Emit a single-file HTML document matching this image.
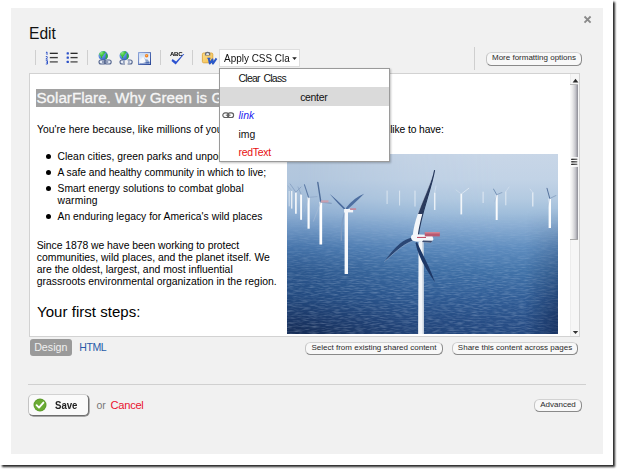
<!DOCTYPE html>
<html>
<head>
<meta charset="utf-8">
<title>Edit</title>
<style>
*{box-sizing:border-box;margin:0;padding:0}
html,body{width:617px;height:469px;overflow:hidden;background:#fff}
body{position:relative;font-family:"Liberation Sans",sans-serif;color:#000}
.abs{position:absolute}
#frame{left:0;top:0;width:613px;height:465px;background:#fff;box-shadow:2px 2px 2px rgba(0,0,0,.85)}
#panel{left:11px;top:8px;width:592px;height:446px;background:#f1f1f1}
#title{left:29px;top:25px;font-size:15.6px;line-height:18px;color:#111;white-space:nowrap}
.vsep{width:1px;background:#cfcfcf}
.btn{border:1px solid #8a8a8a;border-top-color:#d2d2d2;border-left-color:#c4c4c4;border-radius:5.5px;background:#f8f8f8;color:#2a2a2a;font-size:8px;text-align:center;white-space:nowrap}
#editor{left:29px;top:73px;width:551px;height:264px;background:#fff;border:1px solid #d2d2d2;overflow:hidden}
.t{white-space:nowrap}
.di{position:absolute;left:0;width:169px;height:18.5px;padding-left:18.5px;padding-top:1.3px;font-size:10.45px;line-height:18.5px;color:#111;white-space:nowrap;overflow:hidden}
</style>
</head>
<body>
<div id="frame" class="abs"></div>
<div id="panel" class="abs"></div>

<svg class="abs" style="left:583px;top:15px" width="9" height="9" viewBox="0 0 9 9"><path d="M1.5 1.5 L7.6 7.6 M7.6 1.5 L1.5 7.6" stroke="#8a8a8a" stroke-width="1.8" fill="none"/></svg>

<div id="title" class="abs">Edit</div>

<div class="abs vsep" style="left:35px;top:50px;height:15px"></div>
<div class="abs vsep" style="left:87px;top:50px;height:15px"></div>
<div class="abs vsep" style="left:160px;top:50px;height:15px"></div>
<div class="abs vsep" style="left:192px;top:50px;height:15px"></div>
<div class="abs vsep" style="left:474px;top:47px;height:23px"></div>
<svg class="abs" style="left:45px;top:51px" width="14" height="14" viewBox="0 0 14 14">
<path d="M4.8 2.35H12.8" stroke="#2a2a2a" stroke-width="1.35"/><path d="M4.8 6.6H12.8" stroke="#3a3a3a" stroke-width="1.35"/><path d="M4.8 10.9H12.8" stroke="#505050" stroke-width="1.35"/>
<path d="M0.9 1.8L2 0.9V3.9" stroke="#2d52c8" stroke-width="1" fill="none"/>
<path d="M0.8 5.6Q2.6 5 2.4 6.4L0.9 8.1H2.8" stroke="#2d52c8" stroke-width="0.95" fill="none"/>
<path d="M0.8 9.7H2.5V13H0.8M1.3 11.3H2.5" stroke="#2d52c8" stroke-width="0.95" fill="none"/>
</svg>
<svg class="abs" style="left:65.5px;top:51px" width="13" height="14" viewBox="0 0 13 14">
<path d="M4.5 2.35H11.6" stroke="#2a2a2a" stroke-width="1.35"/><path d="M4.5 6.6H11.6" stroke="#3a3a3a" stroke-width="1.35"/><path d="M4.5 10.9H11.6" stroke="#505050" stroke-width="1.35"/>
<rect x="0.6" y="1.2" width="2.3" height="2.3" rx="0.5" fill="#2d52c8"/><rect x="0.6" y="5.45" width="2.3" height="2.3" rx="0.5" fill="#2d52c8"/><rect x="0.6" y="9.75" width="2.3" height="2.3" rx="0.5" fill="#2d52c8"/>
</svg>
<svg class="abs" style="left:98.4px;top:50.9px" width="14" height="14" viewBox="0 0 14 14"><defs><radialGradient id="gl1" cx="0.3" cy="0.25" r="0.9"><stop offset="0" stop-color="#9cc2f5"/><stop offset="0.55" stop-color="#4f80dc"/><stop offset="1" stop-color="#2c55b8"/></radialGradient>
<radialGradient id="gg1" cx="0.3" cy="0.2" r="0.9"><stop offset="0" stop-color="#8ee88a"/><stop offset="0.5" stop-color="#3cc43a"/><stop offset="1" stop-color="#2a9a2c"/></radialGradient></defs>
<circle cx="5.2" cy="4.7" r="4.7" fill="url(#gl1)"/>
<path d="M1.2 2.4 Q3 -0.2 6.2 0.2 Q8 0.8 7.4 2 Q5.8 2.4 5.6 3.8 Q5.4 5 4.2 5.2 Q4.6 6.6 3.6 7.4 Q2.6 6.4 2.6 5.2 Q1 4.4 1.2 2.4Z" fill="url(#gg1)"/>
<path d="M8.2 2.2 Q9.8 3.6 9.8 5.4 Q9.4 7.4 7.8 8.6 Q7 7.6 7.8 6.2 Q7.2 4.6 8.2 2.2Z" fill="#2fae36"/><rect x="1" y="9" width="6.4" height="4" rx="2" fill="#e6ecf6" stroke="#55668f" stroke-width="1.1"/>
<rect x="6.8" y="9" width="6.4" height="4" rx="2" fill="#e6ecf6" stroke="#55668f" stroke-width="1.1"/>
<path d="M4 11H10.2" stroke="#4a5c88" stroke-width="1.1"/></svg>
<svg class="abs" style="left:118.6px;top:50.9px" width="14" height="14" viewBox="0 0 14 14"><defs><radialGradient id="gl2" cx="0.3" cy="0.25" r="0.9"><stop offset="0" stop-color="#9cc2f5"/><stop offset="0.55" stop-color="#4f80dc"/><stop offset="1" stop-color="#2c55b8"/></radialGradient>
<radialGradient id="gg2" cx="0.3" cy="0.2" r="0.9"><stop offset="0" stop-color="#8ee88a"/><stop offset="0.5" stop-color="#3cc43a"/><stop offset="1" stop-color="#2a9a2c"/></radialGradient></defs>
<circle cx="5.2" cy="4.7" r="4.7" fill="url(#gl2)"/>
<path d="M1.2 2.4 Q3 -0.2 6.2 0.2 Q8 0.8 7.4 2 Q5.8 2.4 5.6 3.8 Q5.4 5 4.2 5.2 Q4.6 6.6 3.6 7.4 Q2.6 6.4 2.6 5.2 Q1 4.4 1.2 2.4Z" fill="url(#gg2)"/>
<path d="M8.2 2.2 Q9.8 3.6 9.8 5.4 Q9.4 7.4 7.8 8.6 Q7 7.6 7.8 6.2 Q7.2 4.6 8.2 2.2Z" fill="#2fae36"/><path d="M6 9H3a2 2 0 0 0 0 4H6" fill="#e6ecf6" stroke="#55668f" stroke-width="1.1"/>
<path d="M8.6 9H11.2a2 2 0 0 1 0 4H8.6" fill="#e6ecf6" stroke="#55668f" stroke-width="1.1"/>
<path d="M4 11H5.8M9.2 11H10.6" stroke="#4a5c88" stroke-width="1"/></svg>
<svg class="abs" style="left:138px;top:51.6px" width="13" height="13" viewBox="0 0 13 13">
<defs><linearGradient id="isky" x1="0" y1="0" x2="0" y2="1"><stop offset="0" stop-color="#c4d9f3"/><stop offset="0.7" stop-color="#f4f8fd"/></linearGradient>
<linearGradient id="ibd" x1="0" y1="0" x2="1" y2="1"><stop offset="0" stop-color="#7b98d6"/><stop offset="1" stop-color="#2a4696"/></linearGradient></defs>
<rect x="0.7" y="0.7" width="11.8" height="11.8" fill="#fff" stroke="url(#ibd)" stroke-width="1.1"/>
<rect x="1.6" y="1.6" width="10" height="10" fill="url(#isky)"/>
<circle cx="8.6" cy="3.7" r="1.7" fill="#f47f1c"/><circle cx="8.4" cy="3.5" r="0.8" fill="#fbb45a"/>
<path d="M1.6 9.4 L5.2 4.8 L8 7.8 L9 7 L11.6 9.8 V11.6 H1.6Z" fill="#f7f9fc"/>
<path d="M5.2 4.8 L8 7.8 L9 7 L11.6 9.8 V11.6 H7.6 Q8.2 8.6 5.2 4.8Z" fill="#8fa5cc"/>
<path d="M1.6 11.6 H11.6 V10.4 Q8 10.2 5 10.9 Q3 11.3 1.6 10.8Z" fill="#3456a8"/>
</svg>
<div class="abs" style="left:169.9px;top:50.6px;font-size:6px;line-height:7px;font-weight:bold;color:#000;letter-spacing:-0.3px;transform:scaleX(1.01);transform-origin:0 0">ABC</div>
<svg class="abs" style="left:171px;top:53px" width="14" height="12" viewBox="0 0 14 12"><path d="M1.5 6 L5.1 8.5 L12.3 0.9 L13.3 1.1 L4.7 11.4 L0.5 7.9 Z" fill="#2b52d0"/></svg>
<svg class="abs" style="left:201px;top:50.5px" width="17" height="14" viewBox="0 0 17 14">
<defs><linearGradient id="cb" x1="0" y1="0" x2="1" y2="1"><stop offset="0" stop-color="#fbdc8c"/><stop offset="1" stop-color="#f3c04e"/></linearGradient></defs>
<rect x="1.4" y="2" width="10.4" height="9.8" rx="1.3" fill="url(#cb)" stroke="#dfa63c" stroke-width="0.9"/>
<path d="M3.9 4.4 V3 Q3.9 0.7 6.6 0.7 Q9.3 0.7 9.3 3 V4.4 Z" fill="#6a6e78"/>
<path d="M5.2 4 V3.2 Q5.2 2 6.6 2 Q8 2 8 3.2 V4 Z" fill="#dfe3ea"/>
<path d="M6.4 7.3 H9.4" stroke="#2a58c8" stroke-width="1.2"/>
<path d="M7.7 7.4 L8.8 12.6 L11.4 8.4 L11.9 12.6 L15.5 7.4" stroke="#2a58c8" stroke-width="1.9" fill="none" stroke-linejoin="round" stroke-linecap="butt"/>
</svg>
<div class="abs btn" style="left:486px;top:52px;width:96px;height:13.5px;line-height:9.5px">More formatting options</div>

<div id="editor" class="abs">
<div class="abs" style="left:6.4px;top:15px;height:18px;background:#a1a1a1;color:#f6f6f6;font-size:15.23px;line-height:18.8px;-webkit-text-stroke:0.3px #f6f6f6;white-space:nowrap">SolarFlare. Why Green is Good</div>
<div class="abs t" style="left:7.00px;top:49.75px;font-size:10.3px;line-height:12px;color:#000;letter-spacing:0.061px;">You're here because, like millions of your fellow</div>
<div class="abs t" style="left:360.20px;top:49.75px;font-size:10.3px;line-height:12px;color:#000;letter-spacing:-0.113px;">like to have:</div>
<div class="abs t" style="left:27.50px;top:76.75px;font-size:10.3px;line-height:12px;color:#000;letter-spacing:0.057px;">Clean cities, green parks and unpolluted</div>
<div class="abs t" style="left:27.50px;top:92.75px;font-size:10.3px;line-height:12px;color:#000;letter-spacing:-0.033px;">A safe and healthy community in which to live;</div>
<div class="abs t" style="left:27.50px;top:108.75px;font-size:10.3px;line-height:12px;color:#000;letter-spacing:0.065px;">Smart energy solutions to combat global</div>
<div class="abs t" style="left:27.50px;top:120.75px;font-size:10.3px;line-height:12px;color:#000;letter-spacing:0.197px;">warming</div>
<div class="abs t" style="left:27.50px;top:136.75px;font-size:10.3px;line-height:12px;color:#000;letter-spacing:0.034px;">An enduring legacy for America's wild places</div>
<div class="abs" style="left:16.00px;top:80.10px;width:5px;height:5px;border-radius:50%;background:#000"></div>
<div class="abs" style="left:16.00px;top:96.10px;width:5px;height:5px;border-radius:50%;background:#000"></div>
<div class="abs" style="left:16.00px;top:112.10px;width:5px;height:5px;border-radius:50%;background:#000"></div>
<div class="abs" style="left:16.00px;top:140.10px;width:5px;height:5px;border-radius:50%;background:#000"></div>
<div class="abs t" style="left:6.70px;top:165.75px;font-size:10.4px;line-height:12px;color:#000;letter-spacing:-0.049px;">Since 1878 we have been working to protect</div>
<div class="abs t" style="left:6.70px;top:177.75px;font-size:10.4px;line-height:12px;color:#000;letter-spacing:0.024px;">communities, wild places, and the planet itself. We</div>
<div class="abs t" style="left:6.70px;top:189.75px;font-size:10.4px;line-height:12px;color:#000;letter-spacing:0.018px;">are the oldest, largest, and most influential</div>
<div class="abs t" style="left:6.70px;top:201.75px;font-size:10.4px;line-height:12px;color:#000;letter-spacing:0.018px;">grassroots environmental organization in the region.</div>
<div class="abs t" style="left:7.10px;top:229.25px;font-size:15px;line-height:17px;color:#000;letter-spacing:0.028px;">Your first steps:</div>
<svg class="abs" id="photo" style="left:257px;top:80px" width="271" height="180" viewBox="0 0 271 180">
<defs>
<linearGradient id="gL" x1="0" y1="0" x2="0" y2="1">
<stop offset="0" stop-color="#b6c8dd"/><stop offset="0.14" stop-color="#b1c6dd"/><stop offset="0.25" stop-color="#a3bdd9"/>
<stop offset="0.33" stop-color="#8eaed2"/><stop offset="0.41" stop-color="#7097c4"/><stop offset="0.52" stop-color="#4674aa"/>
<stop offset="0.65" stop-color="#2d588e"/><stop offset="0.79" stop-color="#234a7f"/><stop offset="0.92" stop-color="#1b3766"/><stop offset="1" stop-color="#162d56"/>
</linearGradient>
<linearGradient id="gR" x1="0" y1="0" x2="0" y2="1">
<stop offset="0" stop-color="#c8d6e7"/><stop offset="0.14" stop-color="#c2d3e6"/><stop offset="0.25" stop-color="#b3cae1"/>
<stop offset="0.33" stop-color="#a0bedb"/><stop offset="0.41" stop-color="#86aad1"/><stop offset="0.52" stop-color="#5f8dbf"/>
<stop offset="0.65" stop-color="#4273a9"/><stop offset="0.79" stop-color="#325f98"/><stop offset="0.92" stop-color="#295088"/><stop offset="1" stop-color="#244980"/>
</linearGradient>
<linearGradient id="hm" x1="0" y1="0" x2="1" y2="0">
<stop offset="0.04" stop-color="#fff" stop-opacity="0"/><stop offset="0.45" stop-color="#fff" stop-opacity="0.75"/><stop offset="0.78" stop-color="#fff" stop-opacity="1"/>
</linearGradient>
<mask id="mR"><rect width="271" height="180" fill="url(#hm)"/></mask>
<linearGradient id="vr" x1="0" y1="0" x2="1" y2="0">
<stop offset="0.88" stop-color="#07153a" stop-opacity="0"/><stop offset="1" stop-color="#07153a" stop-opacity="0.42"/>
</linearGradient>
<linearGradient id="vrm" x1="0" y1="0" x2="0" y2="1">
<stop offset="0.3" stop-color="#fff" stop-opacity="0"/><stop offset="0.9" stop-color="#fff" stop-opacity="1"/>
</linearGradient>
<mask id="mV"><rect width="271" height="180" fill="url(#vrm)"/></mask>
<linearGradient id="seamask" x1="0" y1="0" x2="0" y2="1">
<stop offset="0.3" stop-color="#fff" stop-opacity="0"/>
<stop offset="0.72" stop-color="#fff" stop-opacity="1"/>
</linearGradient>
<mask id="sm"><rect width="271" height="180" fill="url(#seamask)"/></mask>
<filter id="waves" x="0" y="0" width="100%" height="100%">
<feTurbulence type="fractalNoise" baseFrequency="0.13 0.75" numOctaves="2" seed="7"/>
<feColorMatrix type="matrix" values="0 0 0 0 0.8  0 0 0 0 0.88  0 0 0 0 1  1.9 0 0 0 -0.78"/>
</filter>
</defs>
<rect width="271" height="180" fill="url(#gL)"/>
<rect width="271" height="180" fill="url(#gR)" mask="url(#mR)"/>
<rect width="271" height="180" filter="url(#waves)" mask="url(#sm)" opacity="0.27"/>
<rect width="271" height="180" fill="url(#vr)" mask="url(#mV)"/>
<line x1="100.1" y1="36.6" x2="100.1" y2="50" stroke="#fff" stroke-width="1" opacity="0.55"/>
<line x1="112.6" y1="36.6" x2="112.6" y2="51.5" stroke="#fff" stroke-width="1" opacity="0.55"/>
<line x1="128" y1="36.6" x2="128" y2="52.5" stroke="#fff" stroke-width="1" opacity="0.6"/>
<line x1="147.7" y1="38.8" x2="147.7" y2="56" stroke="#fff" stroke-width="1.5" opacity="0.75"/><line x1="147.7" y1="38.8" x2="149" y2="32" stroke="#f4f7fb" stroke-width="0.7" opacity="0.5" stroke-linecap="round"/>
<line x1="174.3" y1="40" x2="174.3" y2="60.4" stroke="#fff" stroke-width="1.7" opacity="0.85"/><line x1="174.3" y1="40" x2="181.8" y2="34.3" stroke="#f4f7fb" stroke-width="0.8" opacity="0.7" stroke-linecap="round"/><line x1="174.3" y1="40" x2="169" y2="36" stroke="#f4f7fb" stroke-width="0.7" opacity="0.4" stroke-linecap="round"/>
<line x1="196.1" y1="37.7" x2="196.1" y2="49" stroke="#fff" stroke-width="1" opacity="0.6"/>
<line x1="209.7" y1="40.7" x2="209.7" y2="66" stroke="#fff" stroke-width="2" opacity="0.95"/><line x1="209.7" y1="40.7" x2="206.5" y2="35" stroke="#5b7aa5" stroke-width="0.9" opacity="0.8" stroke-linecap="round"/><line x1="209.7" y1="40.7" x2="215" y2="38.5" stroke="#6b86ad" stroke-width="0.8" opacity="0.7" stroke-linecap="round"/><line x1="209.7" y1="40.7" x2="207.5" y2="48" stroke="#9fb6d3" stroke-width="0.8" opacity="0.6" stroke-linecap="round"/>
<line x1="218.8" y1="37.7" x2="218.8" y2="51.3" stroke="#fff" stroke-width="1" opacity="0.6"/><line x1="218.8" y1="37.7" x2="222" y2="33" stroke="#f4f7fb" stroke-width="0.6" opacity="0.5" stroke-linecap="round"/>
<line x1="245.8" y1="38.4" x2="245.8" y2="52.5" stroke="#fff" stroke-width="1.2" opacity="0.7"/><line x1="245.8" y1="38.4" x2="243" y2="35" stroke="#f4f7fb" stroke-width="0.7" opacity="0.5" stroke-linecap="round"/>
<line x1="262.8" y1="44.5" x2="262.8" y2="74" stroke="#fff" stroke-width="2.4" opacity="0.97"/><line x1="262.8" y1="44.5" x2="260" y2="34.3" stroke="#4a6894" stroke-width="1" opacity="0.9" stroke-linecap="round"/><line x1="262.8" y1="44.5" x2="269" y2="41.5" stroke="#7c96ba" stroke-width="0.9" opacity="0.8" stroke-linecap="round"/><line x1="262.8" y1="44.5" x2="260.5" y2="53" stroke="#a5bbd6" stroke-width="0.8" opacity="0.6" stroke-linecap="round"/>
<line x1="2.2" y1="37" x2="2.2" y2="52.3" stroke="#fff" stroke-width="1" opacity="0.55"/>
<line x1="4.7" y1="36.7" x2="4.7" y2="54.6" stroke="#fff" stroke-width="1.4" opacity="0.75"/><line x1="4.7" y1="36.7" x2="1" y2="32" stroke="#8da6c6" stroke-width="0.8" opacity="0.6" stroke-linecap="round"/>
<line x1="8.9" y1="38.2" x2="8.9" y2="59.8" stroke="#fff" stroke-width="1.7" opacity="0.9"/><line x1="8.9" y1="38.2" x2="3.2" y2="30" stroke="#7f99bd" stroke-width="0.9" opacity="0.8" stroke-linecap="round"/><line x1="8.9" y1="38.2" x2="14" y2="33" stroke="#7f99bd" stroke-width="0.9" opacity="0.8" stroke-linecap="round"/>
<line x1="14.1" y1="40.4" x2="14.1" y2="65.8" stroke="#fff" stroke-width="1.9" opacity="0.95"/><line x1="14.1" y1="40.4" x2="11" y2="33" stroke="#7f99bd" stroke-width="0.8" opacity="0.7" stroke-linecap="round"/>
<line x1="21.6" y1="43.4" x2="21.6" y2="74.7" stroke="#fff" stroke-width="2.2" opacity="0.97"/><line x1="21.6" y1="43.4" x2="17.4" y2="30.7" stroke="#5473a0" stroke-width="1.1" opacity="0.9" stroke-linecap="round"/><line x1="21.6" y1="43.4" x2="30" y2="42.6" stroke="#8aa3c4" stroke-width="0.9" opacity="0.7" stroke-linecap="round"/><line x1="21.6" y1="43.4" x2="17" y2="58" stroke="#a9bdd7" stroke-width="0.8" opacity="0.5" stroke-linecap="round"/>
<line x1="33.8" y1="47.9" x2="33.8" y2="90.5" stroke="#fff" stroke-width="2.7" opacity="1"/><line x1="33.8" y1="47.9" x2="30.8" y2="28.5" stroke="#4a6996" stroke-width="1.4" opacity="0.95" stroke-linecap="round"/><line x1="33.8" y1="47.9" x2="44.3" y2="49.4" stroke="#7e98bc" stroke-width="1.1" opacity="0.8" stroke-linecap="round"/><line x1="33.8" y1="47.9" x2="26.4" y2="67.3" stroke="#a9bdd7" stroke-width="1" opacity="0.55" stroke-linecap="round"/>
<rect x="34" y="46.3" width="7.5" height="2.2" fill="#c9a0b0"/>
<path d="M57.6 58.8 Q53.6 70.8 54.4 86.8" stroke="#7f9cc2" stroke-width="1.4" fill="none" opacity="0.9"/>
<rect x="57.6" y="57" width="3.4" height="63" fill="#f6f8fb"/>
<path d="M58.6 56.8 Q52.6 51.8 42.8 40.1 Q48.1 44.3 57.6 53.8 Z" fill="#48689a"/>
<path d="M58.6 56.8 Q65.6 51.3 77.1 39.7 Q66.6 43.8 59.1 53.8 Z" fill="#4d6ea0"/>
<rect x="57.1" y="55.0" width="9" height="3.4" fill="#f3f5f9"/>
<rect x="63.1" y="54.199999999999996" width="6" height="1.8" fill="#c38a9f"/>
<polygon points="131.6,88 136.4,88 136.9,180 131.1,180" fill="#f2f5f9"/>
<polygon points="135.2,88 136.4,88 136.9,180 135.6,180" fill="#c9d3e0"/>
<path d="M130 88 C134.8 99 142.5 112.5 148 128.3 C139 115.5 131.3 103 128.5 89 Z" fill="#1d3766"/>
<path d="M125 83.5 C115 85.5 105.3 95.8 97.3 107.8 C104.3 101.8 116 90.0 125.5 87.1 Z" fill="#2a4674"/>
<path d="M97.3 107.8 C104.3 101.8 116 90.0 125.5 87.1" stroke="#8ea7c8" stroke-width="0.7" fill="none"/>
<clipPath id="cl"><rect x="0" y="60" width="271" height="60"/></clipPath><clipPath id="cu"><rect x="0" y="0" width="271" height="60"/></clipPath>
<path d="M125.6 82.5 C127.6 60.5 138.6 44.2 147.6 16.2 C143.6 38.2 134.1 58.5 131.2 82.0 Z" fill="#f3f6fa" clip-path="url(#cl)"/>
<path d="M125.6 82.5 C127.6 60.5 138.6 44.2 147.6 16.2 C143.6 38.2 134.1 58.5 131.2 82.0 Z" fill="#2a3a5c" clip-path="url(#cu)"/>
<path d="M125.6 82.5 C127.6 60.5 138.6 44.2 147.6 16.2" stroke="#c9d6e6" stroke-width="0.7" fill="none" clip-path="url(#cu)" opacity="0.8"/>
<path d="M147.6 16.2 C143.6 38.2 134.1 58.5 131.2 82.0" stroke="#24365a" stroke-width="1.1" fill="none"/>
<path d="M124 83.3 Q124 80.3 128 80.3 L145 81.1 L146.5 85.3 L144 88.7 L129 87.5 Q124 87.3 124 83.3 Z" fill="#f4f6fa"/>
<path d="M136 86.5 L145.5 86.7 L144 88.7 L135 88.1 Z" fill="#3a4a6e"/>
<rect x="130" y="82.89999999999999" width="9" height="1.1" fill="#c0506a"/>
<rect x="137.8" y="78.2" width="15" height="4.2" fill="#b9586f"/>
<rect x="137.8" y="78.2" width="15" height="1.2" fill="#d98a9a"/>
</svg>

<div class="abs" style="left:540px;top:0;width:9px;height:262px;background:#f6f6f6;border-left:1px solid #ececec"></div>
<svg class="abs" style="left:541.5px;top:3.6px" width="7" height="5" viewBox="0 0 7 5"><path d="M0.6 4.4 L3.5 0.8 L6.4 4.4 Z" fill="#2a2a2a"/></svg>
<div class="abs" style="left:540.4px;top:10px;width:7.6px;height:156px;background:linear-gradient(to right,#fbfbfb 0%,#efefef 25%,#d9d9dc 50%,#c0c0c6 72%,#9c9ca4 90%,#8e8e96 100%);border-top:1px solid #b8b8b8;border-bottom:1px solid #a8a8a8"></div>
<div class="abs" style="left:540.6px;top:83px;width:7.6px;height:9.6px;background:rgba(255,255,255,.85)"></div>
<svg class="abs" style="left:540.6px;top:83px" width="8" height="10" viewBox="0 0 8 10"><defs><linearGradient id="gr" x1="0" y1="0" x2="1" y2="0"><stop offset="0" stop-color="#222"/><stop offset="1" stop-color="#777"/></linearGradient></defs><path d="M0.4 2.4H6.2M0.4 4.8H6.2M0.4 7.4H6.2" stroke="url(#gr)" stroke-width="1.1"/><rect x="0.4" y="1.85" width="5.8" height="1.1" fill="url(#gr)"/><rect x="0.4" y="4.25" width="5.8" height="1.1" fill="url(#gr)"/><rect x="0.4" y="6.85" width="5.8" height="1.1" fill="url(#gr)"/></svg>
<svg class="abs" style="left:541.5px;top:255.5px" width="7" height="5" viewBox="0 0 7 5"><path d="M0.8 1 L3.5 4 L6.2 1 Z" fill="#333"/></svg>

</div>

<div class="abs" style="left:219px;top:49px;width:81px;height:18px;background:#fff;border:1px solid #dedede"></div>
<div class="abs" style="left:223.5px;top:50.7px;font-size:10.9px;line-height:14px;color:#111;white-space:nowrap;transform:scaleX(.913);transform-origin:0 0">Apply CSS Cla</div>
<svg class="abs" style="left:292.3px;top:56.8px" width="5" height="3" viewBox="0 0 5 3"><path d="M0.2 0.2 L4.8 0.2 L2.5 2.9 Z" fill="#222"/></svg>
<div class="abs" id="dd" style="left:219px;top:68px;width:171px;height:94px;background:#fff;border:1px solid #9a9a9a;box-shadow:1px 1px 2px rgba(0,0,0,.25)">
 <div class="di" style="top:0;letter-spacing:-0.72px;word-spacing:1.4px">Clear Class</div>
 <div class="di" style="top:18.4px;background:#dadada;text-align:center;letter-spacing:-0.3px">center</div>
 <div class="di" style="top:36.9px;color:#1b1bf0;font-style:italic">link</div>
 <div class="di" style="top:55.4px">img</div>
 <div class="di" style="top:73.9px;color:#e81010;letter-spacing:-0.28px">redText</div>
 <svg class="abs" style="left:2.2px;top:43.3px" width="13" height="7" viewBox="0 0 13 7"><rect x="0.8" y="0.9" width="6" height="4.6" rx="2.3" fill="none" stroke="#5e5e5e" stroke-width="1.15"/><rect x="5.6" y="0.9" width="6" height="4.6" rx="2.3" fill="none" stroke="#5e5e5e" stroke-width="1.15"/><path d="M3.8 3.2H8.6" stroke="#666" stroke-width="1"/></svg>
</div>

<div class="abs btn" style="left:305px;top:342px;width:138px;height:13px;line-height:9.5px">Select from existing shared content</div>
<div class="abs btn" style="left:452px;top:342px;width:126px;height:13px;line-height:9.5px">Share this content across pages</div>

<div class="abs" style="left:29.6px;top:339px;width:42.4px;height:17px;border-radius:3px;background:#9a9a9a;color:#f0f0f0;font-size:10.7px;line-height:17px;text-align:center">Design</div>
<div class="abs" style="left:79.3px;top:339px;font-size:10.6px;line-height:17px;letter-spacing:-0.5px;color:#2a5aa8">HTML</div>

<div class="abs" style="left:28px;top:384px;width:558px;height:1px;background:#d0d0d0"></div>

<div class="abs btn" style="left:28.3px;top:394.3px;width:61px;height:22px;border-radius:5px;background:#fafafa;border-right-color:#6e6e6e;border-bottom-color:#6e6e6e;box-shadow:0.7px 0.7px 0 #8e8e8e"></div>
<svg class="abs" style="left:33px;top:398px" width="14" height="14" viewBox="0 0 14 14"><circle cx="7" cy="7" r="6.5" fill="#5d9b2c"/><circle cx="7" cy="7" r="5.6" fill="#6aab33"/><path d="M3.6 7.2 L6 9.6 L10.4 4.6" stroke="#fff" stroke-width="1.9" fill="none" stroke-linecap="round" stroke-linejoin="round"/></svg>
<div class="abs" style="left:54.5px;top:398px;font-size:11.6px;font-weight:bold;line-height:14px;color:#222;transform:scaleX(.83);transform-origin:0 0">Save</div>
<div class="abs" style="left:96.5px;top:398px;font-size:10.5px;line-height:14px;color:#777">or</div>
<div class="abs" style="left:110.6px;top:398px;font-size:11.2px;line-height:14px;letter-spacing:-0.33px;color:#ea1330">Cancel</div>

<div class="abs btn" style="left:534px;top:399px;width:48px;height:13px;line-height:9.5px">Advanced</div>
</body>
</html>
